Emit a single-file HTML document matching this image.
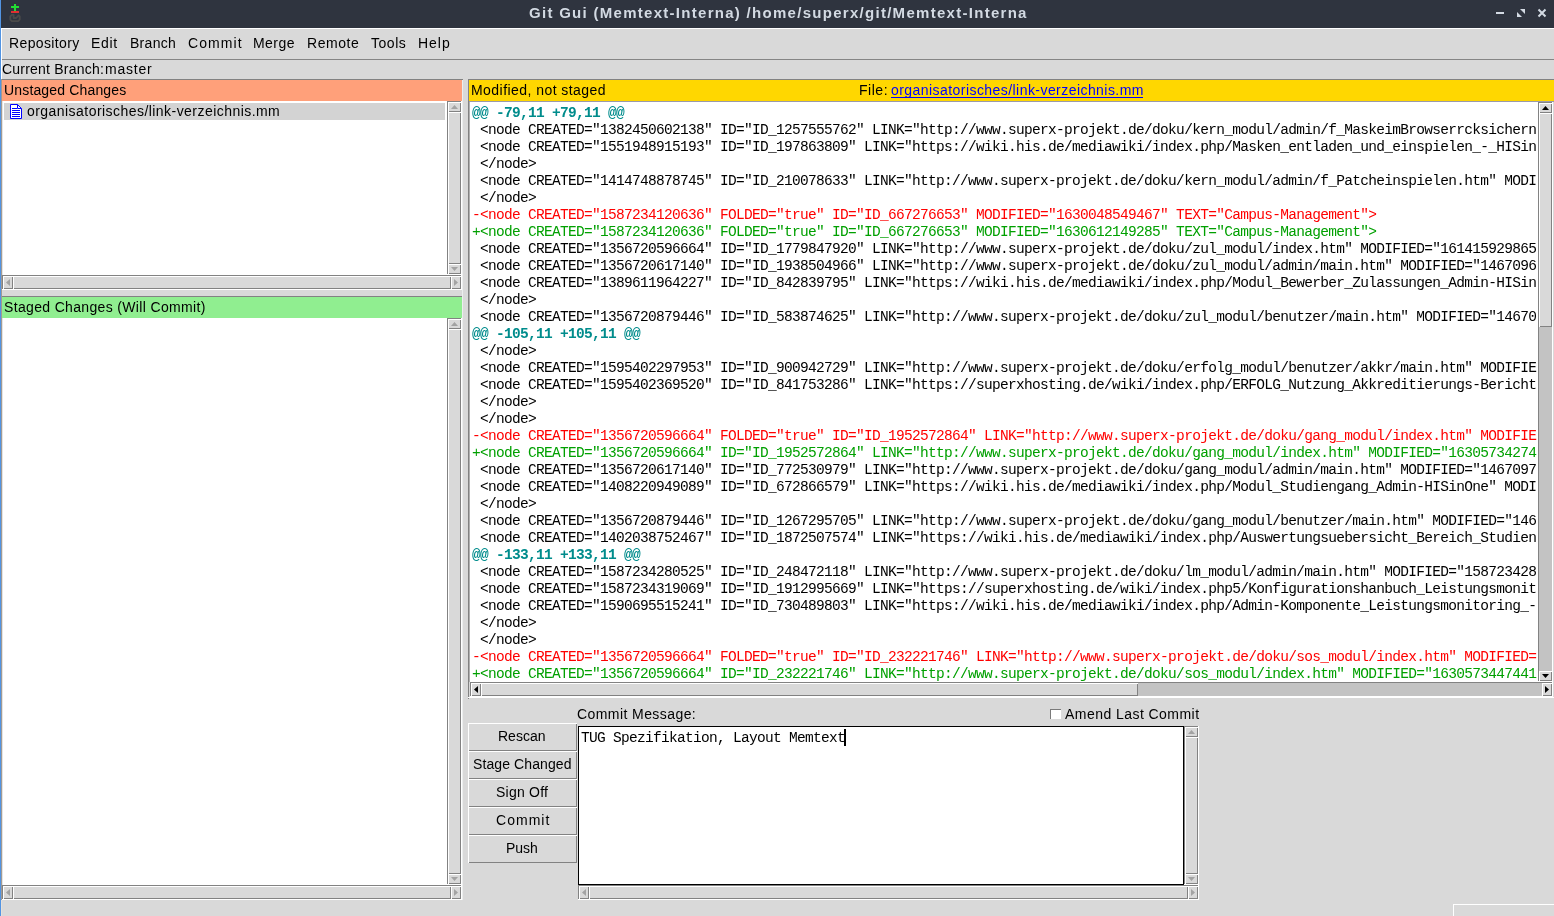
<!DOCTYPE html>
<html><head><meta charset="utf-8"><style>
html,body{margin:0;padding:0;}
body{width:1554px;height:916px;position:relative;overflow:hidden;background:#d9d9d9;}
body>div,body>svg{position:absolute;}
.ui{font-family:"Liberation Sans",sans-serif;font-size:14px;color:#000;white-space:pre;line-height:16px;will-change:transform;}
.mono{font-family:"Liberation Mono",monospace;font-size:14.5px;letter-spacing:-0.7px;white-space:pre;line-height:17px;will-change:transform;}
</style></head><body>
<div style="left:0px;top:0px;width:1px;height:916px;background:#5294e2;"></div><div style="left:1px;top:0px;width:1553px;height:28px;background:#2f343f;"></div><div style="left:1px;top:28px;width:1553px;height:1px;background:#ffffff;"></div><div style="left:1px;top:29px;width:1px;height:887px;background:#ffffff;"></div><div style="left:1px;top:79px;width:1px;height:821px;background:#a09a94;"></div><div style="left:1px;top:900px;width:1px;height:16px;background:#e6e0da;"></div><div class="ui" style="left:528.63px;top:5px;letter-spacing:1.285px;font-weight:bold;font-size:15px;color:#d3dae3">Git Gui (Memtext-Interna) /home/superx/git/Memtext-Interna</div><div style="left:1496px;top:12px;width:8px;height:2px;background:#d3dae3;"></div><svg style="left:0;top:0" width="1554" height="28"><polygon points="1520,9 1525,9 1525,14" fill="#d3dae3"/><polygon points="1517,12 1517,17 1522,17" fill="#d3dae3"/><path d="M1538.5,9.5 L1545.5,16.5 M1545.5,9.5 L1538.5,16.5" stroke="#d3dae3" stroke-width="2"/><rect x="11" y="6" width="8" height="2" fill="#22dd33"/><rect x="14" y="4" width="2" height="7" fill="#22dd33"/><rect x="11" y="11" width="8" height="2" fill="#e03030"/><path d="M13.6,14.9 H11.8 L10.3,16.4 V19.6 L11.8,21.1 H18.2 L19.7,19.6 V16.4 L18.6,15.3 L16.2,18 H13.6 Z" stroke="#4a4a4a" stroke-width="1.8" fill="none" stroke-linejoin="round"/></svg><div class="ui" style="left:8.68px;top:35px;letter-spacing:0.372px;;">Repository</div><div class="ui" style="left:91.48px;top:35px;letter-spacing:0.703px;;">Edit</div><div class="ui" style="left:129.58px;top:35px;letter-spacing:0.281px;;">Branch</div><div class="ui" style="left:187.68px;top:35px;letter-spacing:1.064px;;">Commit</div><div class="ui" style="left:252.69px;top:35px;letter-spacing:0.443px;;">Merge</div><div class="ui" style="left:306.58px;top:35px;letter-spacing:0.568px;;">Remote</div><div class="ui" style="left:370.93px;top:35px;letter-spacing:0.542px;;">Tools</div><div class="ui" style="left:418.18px;top:35px;letter-spacing:0.968px;;">Help</div><div style="left:2px;top:59px;width:1552px;height:1px;background:#858585;"></div><div class="ui" style="left:1.68px;top:61px;letter-spacing:0.216px;;">Current Branch:</div><div class="ui" style="left:104.64px;top:61px;letter-spacing:0.768px;;">master</div><div style="left:2px;top:79px;width:461px;height:1px;background:#828282;"></div><div style="left:2px;top:80px;width:460px;height:21px;background:#ffa07a;"></div><div class="ui" style="left:3.6px;top:82px;letter-spacing:0.16px;;">Unstaged Changes</div><div style="left:2px;top:101px;width:445px;height:174px;background:#ffffff;"></div><div style="left:4px;top:103px;width:441px;height:17px;background:#d3d3d3;"></div><svg style="left:10px;top:104px" width="12" height="15"><path d="M0.5,0.5 H7.5 L11.5,4.5 V14.5 H0.5 Z" fill="#fff" stroke="#0000ff"/><path d="M7.5,0.5 V4.5 H11.5" fill="none" stroke="#0000ff"/><path d="M2,4.5 H7 M2,6.5 H10 M2,8.5 H10 M2,10.5 H10 M2,12.5 H10" stroke="#0000ff"/></svg><div class="ui" style="left:27.26px;top:103px;letter-spacing:0.451px;;">organisatorisches/link-verzeichnis.mm</div><div style="left:447px;top:101px;width:15px;height:174px;background:#c3c3c3;"></div><div style="left:447px;top:101px;width:15px;height:1px;background:#828282;"></div><div style="left:447px;top:101px;width:1px;height:174px;background:#828282;"></div><div style="left:447px;top:274px;width:15px;height:1px;background:#ffffff;"></div><div style="left:461px;top:101px;width:1px;height:174px;background:#ffffff;"></div><div style="left:448px;top:102px;width:13px;height:10px;background:#d9d9d9;"></div><div style="left:448px;top:111px;width:13px;height:1px;background:#828282;"></div><div style="left:460px;top:102px;width:1px;height:10px;background:#828282;"></div><div style="left:448px;top:102px;width:13px;height:1px;background:#ffffff;"></div><div style="left:448px;top:102px;width:1px;height:10px;background:#ffffff;"></div><div style="left:448px;top:264px;width:13px;height:10px;background:#d9d9d9;"></div><div style="left:448px;top:273px;width:13px;height:1px;background:#828282;"></div><div style="left:460px;top:264px;width:1px;height:10px;background:#828282;"></div><div style="left:448px;top:264px;width:13px;height:1px;background:#ffffff;"></div><div style="left:448px;top:264px;width:1px;height:10px;background:#ffffff;"></div><div style="left:448px;top:112px;width:13px;height:152px;background:#d9d9d9;"></div><div style="left:448px;top:263px;width:13px;height:1px;background:#828282;"></div><div style="left:460px;top:112px;width:1px;height:152px;background:#828282;"></div><div style="left:448px;top:112px;width:13px;height:1px;background:#ffffff;"></div><div style="left:448px;top:112px;width:1px;height:152px;background:#ffffff;"></div><div style="left:2px;top:275px;width:460px;height:15px;background:#c3c3c3;"></div><div style="left:2px;top:275px;width:460px;height:1px;background:#828282;"></div><div style="left:2px;top:275px;width:1px;height:15px;background:#828282;"></div><div style="left:2px;top:289px;width:460px;height:1px;background:#ffffff;"></div><div style="left:461px;top:275px;width:1px;height:15px;background:#ffffff;"></div><div style="left:3px;top:276px;width:10px;height:13px;background:#d9d9d9;"></div><div style="left:3px;top:288px;width:10px;height:1px;background:#828282;"></div><div style="left:12px;top:276px;width:1px;height:13px;background:#828282;"></div><div style="left:3px;top:276px;width:10px;height:1px;background:#ffffff;"></div><div style="left:3px;top:276px;width:1px;height:13px;background:#ffffff;"></div><div style="left:451px;top:276px;width:10px;height:13px;background:#d9d9d9;"></div><div style="left:451px;top:288px;width:10px;height:1px;background:#828282;"></div><div style="left:460px;top:276px;width:1px;height:13px;background:#828282;"></div><div style="left:451px;top:276px;width:10px;height:1px;background:#ffffff;"></div><div style="left:451px;top:276px;width:1px;height:13px;background:#ffffff;"></div><div style="left:13px;top:276px;width:438px;height:13px;background:#d9d9d9;"></div><div style="left:13px;top:288px;width:438px;height:1px;background:#828282;"></div><div style="left:450px;top:276px;width:1px;height:13px;background:#828282;"></div><div style="left:13px;top:276px;width:438px;height:1px;background:#ffffff;"></div><div style="left:13px;top:276px;width:1px;height:13px;background:#ffffff;"></div><div style="left:2px;top:296px;width:461px;height:1px;background:#828282;"></div><div style="left:2px;top:297px;width:460px;height:21px;background:#90ee90;"></div><div class="ui" style="left:3.89px;top:299px;letter-spacing:0.34px;;">Staged Changes (Will Commit)</div><div style="left:2px;top:318px;width:445px;height:567px;background:#ffffff;"></div><div style="left:447px;top:318px;width:15px;height:567px;background:#c3c3c3;"></div><div style="left:447px;top:318px;width:15px;height:1px;background:#828282;"></div><div style="left:447px;top:318px;width:1px;height:567px;background:#828282;"></div><div style="left:447px;top:884px;width:15px;height:1px;background:#ffffff;"></div><div style="left:461px;top:318px;width:1px;height:567px;background:#ffffff;"></div><div style="left:448px;top:319px;width:13px;height:10px;background:#d9d9d9;"></div><div style="left:448px;top:328px;width:13px;height:1px;background:#828282;"></div><div style="left:460px;top:319px;width:1px;height:10px;background:#828282;"></div><div style="left:448px;top:319px;width:13px;height:1px;background:#ffffff;"></div><div style="left:448px;top:319px;width:1px;height:10px;background:#ffffff;"></div><div style="left:448px;top:874px;width:13px;height:10px;background:#d9d9d9;"></div><div style="left:448px;top:883px;width:13px;height:1px;background:#828282;"></div><div style="left:460px;top:874px;width:1px;height:10px;background:#828282;"></div><div style="left:448px;top:874px;width:13px;height:1px;background:#ffffff;"></div><div style="left:448px;top:874px;width:1px;height:10px;background:#ffffff;"></div><div style="left:448px;top:329px;width:13px;height:545px;background:#d9d9d9;"></div><div style="left:448px;top:873px;width:13px;height:1px;background:#828282;"></div><div style="left:460px;top:329px;width:1px;height:545px;background:#828282;"></div><div style="left:448px;top:329px;width:13px;height:1px;background:#ffffff;"></div><div style="left:448px;top:329px;width:1px;height:545px;background:#ffffff;"></div><div style="left:2px;top:885px;width:460px;height:15px;background:#c3c3c3;"></div><div style="left:2px;top:885px;width:460px;height:1px;background:#828282;"></div><div style="left:2px;top:885px;width:1px;height:15px;background:#828282;"></div><div style="left:2px;top:899px;width:460px;height:1px;background:#ffffff;"></div><div style="left:461px;top:885px;width:1px;height:15px;background:#ffffff;"></div><div style="left:3px;top:886px;width:10px;height:13px;background:#d9d9d9;"></div><div style="left:3px;top:898px;width:10px;height:1px;background:#828282;"></div><div style="left:12px;top:886px;width:1px;height:13px;background:#828282;"></div><div style="left:3px;top:886px;width:10px;height:1px;background:#ffffff;"></div><div style="left:3px;top:886px;width:1px;height:13px;background:#ffffff;"></div><div style="left:451px;top:886px;width:10px;height:13px;background:#d9d9d9;"></div><div style="left:451px;top:898px;width:10px;height:1px;background:#828282;"></div><div style="left:460px;top:886px;width:1px;height:13px;background:#828282;"></div><div style="left:451px;top:886px;width:10px;height:1px;background:#ffffff;"></div><div style="left:451px;top:886px;width:1px;height:13px;background:#ffffff;"></div><div style="left:13px;top:886px;width:438px;height:13px;background:#d9d9d9;"></div><div style="left:13px;top:898px;width:438px;height:1px;background:#828282;"></div><div style="left:450px;top:886px;width:1px;height:13px;background:#828282;"></div><div style="left:13px;top:886px;width:438px;height:1px;background:#ffffff;"></div><div style="left:13px;top:886px;width:1px;height:13px;background:#ffffff;"></div><div style="left:468px;top:79px;width:1086px;height:1px;background:#828282;"></div><div style="left:468px;top:79px;width:1px;height:620px;background:#828282;"></div><div style="left:469px;top:80px;width:1085px;height:21px;background:#ffd700;"></div><div class="ui" style="left:470.69px;top:82px;letter-spacing:0.449px;;">Modified, not staged</div><div class="ui" style="left:858.78px;top:82px;letter-spacing:0.533px;;">File:</div><div class="ui" style="left:890.76px;top:82px;letter-spacing:0.442px;;color:#0000ff">organisatorisches/link-verzeichnis.mm</div><div style="left:891px;top:97px;width:252px;height:1px;background:#0000ff;"></div><div style="left:469px;top:101px;width:1085px;height:1px;background:#9a9aaa;"></div><div style="left:469px;top:102px;width:1069px;height:580px;background:#ffffff;"></div><div style="left:469px;top:102px;width:1px;height:580px;background:#b0b0b0;"></div><div class="mono" style="left:472px;top:105px;width:1065px;height:577px;overflow:hidden"><div style="color:#008c8c;font-weight:bold">@@ -79,11 +79,11 @@</div><div style="color:#000"> &lt;node CREATED=&quot;1382450602138&quot; ID=&quot;ID_1257555762&quot; LINK=&quot;http://www.superx-projekt.de/doku/kern_modul/admin/f_MaskeimBrowserrcksichern</div><div style="color:#000"> &lt;node CREATED=&quot;1551948915193&quot; ID=&quot;ID_197863809&quot; LINK=&quot;https://wiki.his.de/mediawiki/index.php/Masken_entladen_und_einspielen_-_HISin</div><div style="color:#000"> &lt;/node&gt;</div><div style="color:#000"> &lt;node CREATED=&quot;1414748878745&quot; ID=&quot;ID_210078633&quot; LINK=&quot;http://www.superx-projekt.de/doku/kern_modul/admin/f_Patcheinspielen.htm&quot; MODI</div><div style="color:#000"> &lt;/node&gt;</div><div style="color:#ff0000">-&lt;node CREATED=&quot;1587234120636&quot; FOLDED=&quot;true&quot; ID=&quot;ID_667276653&quot; MODIFIED=&quot;1630048549467&quot; TEXT=&quot;Campus-Management&quot;&gt;</div><div style="color:#00a000">+&lt;node CREATED=&quot;1587234120636&quot; FOLDED=&quot;true&quot; ID=&quot;ID_667276653&quot; MODIFIED=&quot;1630612149285&quot; TEXT=&quot;Campus-Management&quot;&gt;</div><div style="color:#000"> &lt;node CREATED=&quot;1356720596664&quot; ID=&quot;ID_1779847920&quot; LINK=&quot;http://www.superx-projekt.de/doku/zul_modul/index.htm&quot; MODIFIED=&quot;161415929865</div><div style="color:#000"> &lt;node CREATED=&quot;1356720617140&quot; ID=&quot;ID_1938504966&quot; LINK=&quot;http://www.superx-projekt.de/doku/zul_modul/admin/main.htm&quot; MODIFIED=&quot;1467096</div><div style="color:#000"> &lt;node CREATED=&quot;1389611964227&quot; ID=&quot;ID_842839795&quot; LINK=&quot;https://wiki.his.de/mediawiki/index.php/Modul_Bewerber_Zulassungen_Admin-HISin</div><div style="color:#000"> &lt;/node&gt;</div><div style="color:#000"> &lt;node CREATED=&quot;1356720879446&quot; ID=&quot;ID_583874625&quot; LINK=&quot;http://www.superx-projekt.de/doku/zul_modul/benutzer/main.htm&quot; MODIFIED=&quot;14670</div><div style="color:#008c8c;font-weight:bold">@@ -105,11 +105,11 @@</div><div style="color:#000"> &lt;/node&gt;</div><div style="color:#000"> &lt;node CREATED=&quot;1595402297953&quot; ID=&quot;ID_900942729&quot; LINK=&quot;http://www.superx-projekt.de/doku/erfolg_modul/benutzer/akkr/main.htm&quot; MODIFIE</div><div style="color:#000"> &lt;node CREATED=&quot;1595402369520&quot; ID=&quot;ID_841753286&quot; LINK=&quot;https://superxhosting.de/wiki/index.php/ERFOLG_Nutzung_Akkreditierungs-Bericht</div><div style="color:#000"> &lt;/node&gt;</div><div style="color:#000"> &lt;/node&gt;</div><div style="color:#ff0000">-&lt;node CREATED=&quot;1356720596664&quot; FOLDED=&quot;true&quot; ID=&quot;ID_1952572864&quot; LINK=&quot;http://www.superx-projekt.de/doku/gang_modul/index.htm&quot; MODIFIE</div><div style="color:#00a000">+&lt;node CREATED=&quot;1356720596664&quot; ID=&quot;ID_1952572864&quot; LINK=&quot;http://www.superx-projekt.de/doku/gang_modul/index.htm&quot; MODIFIED=&quot;16305734274</div><div style="color:#000"> &lt;node CREATED=&quot;1356720617140&quot; ID=&quot;ID_772530979&quot; LINK=&quot;http://www.superx-projekt.de/doku/gang_modul/admin/main.htm&quot; MODIFIED=&quot;1467097</div><div style="color:#000"> &lt;node CREATED=&quot;1408220949089&quot; ID=&quot;ID_672866579&quot; LINK=&quot;https://wiki.his.de/mediawiki/index.php/Modul_Studiengang_Admin-HISinOne&quot; MODI</div><div style="color:#000"> &lt;/node&gt;</div><div style="color:#000"> &lt;node CREATED=&quot;1356720879446&quot; ID=&quot;ID_1267295705&quot; LINK=&quot;http://www.superx-projekt.de/doku/gang_modul/benutzer/main.htm&quot; MODIFIED=&quot;146</div><div style="color:#000"> &lt;node CREATED=&quot;1402038752467&quot; ID=&quot;ID_1872507574&quot; LINK=&quot;https://wiki.his.de/mediawiki/index.php/Auswertungsuebersicht_Bereich_Studien</div><div style="color:#008c8c;font-weight:bold">@@ -133,11 +133,11 @@</div><div style="color:#000"> &lt;node CREATED=&quot;1587234280525&quot; ID=&quot;ID_248472118&quot; LINK=&quot;http://www.superx-projekt.de/doku/lm_modul/admin/main.htm&quot; MODIFIED=&quot;158723428</div><div style="color:#000"> &lt;node CREATED=&quot;1587234319069&quot; ID=&quot;ID_1912995669&quot; LINK=&quot;https://superxhosting.de/wiki/index.php5/Konfigurationshanbuch_Leistungsmonit</div><div style="color:#000"> &lt;node CREATED=&quot;1590695515241&quot; ID=&quot;ID_730489803&quot; LINK=&quot;https://wiki.his.de/mediawiki/index.php/Admin-Komponente_Leistungsmonitoring_-</div><div style="color:#000"> &lt;/node&gt;</div><div style="color:#000"> &lt;/node&gt;</div><div style="color:#ff0000">-&lt;node CREATED=&quot;1356720596664&quot; FOLDED=&quot;true&quot; ID=&quot;ID_232221746&quot; LINK=&quot;http://www.superx-projekt.de/doku/sos_modul/index.htm&quot; MODIFIED=</div><div style="color:#00a000">+&lt;node CREATED=&quot;1356720596664&quot; ID=&quot;ID_232221746&quot; LINK=&quot;http://www.superx-projekt.de/doku/sos_modul/index.htm&quot; MODIFIED=&quot;1630573447441</div></div><div style="left:1538px;top:102px;width:15px;height:580px;background:#c3c3c3;"></div><div style="left:1538px;top:102px;width:15px;height:1px;background:#828282;"></div><div style="left:1538px;top:102px;width:1px;height:580px;background:#828282;"></div><div style="left:1538px;top:681px;width:15px;height:1px;background:#ffffff;"></div><div style="left:1552px;top:102px;width:1px;height:580px;background:#ffffff;"></div><div style="left:1539px;top:103px;width:13px;height:10px;background:#d9d9d9;"></div><div style="left:1539px;top:112px;width:13px;height:1px;background:#828282;"></div><div style="left:1551px;top:103px;width:1px;height:10px;background:#828282;"></div><div style="left:1539px;top:103px;width:13px;height:1px;background:#ffffff;"></div><div style="left:1539px;top:103px;width:1px;height:10px;background:#ffffff;"></div><div style="left:1539px;top:671px;width:13px;height:10px;background:#d9d9d9;"></div><div style="left:1539px;top:680px;width:13px;height:1px;background:#828282;"></div><div style="left:1551px;top:671px;width:1px;height:10px;background:#828282;"></div><div style="left:1539px;top:671px;width:13px;height:1px;background:#ffffff;"></div><div style="left:1539px;top:671px;width:1px;height:10px;background:#ffffff;"></div><div style="left:1539px;top:113px;width:13px;height:214px;background:#d9d9d9;"></div><div style="left:1539px;top:326px;width:13px;height:1px;background:#828282;"></div><div style="left:1551px;top:113px;width:1px;height:214px;background:#828282;"></div><div style="left:1539px;top:113px;width:13px;height:1px;background:#ffffff;"></div><div style="left:1539px;top:113px;width:1px;height:214px;background:#ffffff;"></div><div style="left:470px;top:682px;width:1083px;height:15px;background:#c3c3c3;"></div><div style="left:470px;top:682px;width:1083px;height:1px;background:#828282;"></div><div style="left:470px;top:682px;width:1px;height:15px;background:#828282;"></div><div style="left:470px;top:696px;width:1083px;height:1px;background:#ffffff;"></div><div style="left:1552px;top:682px;width:1px;height:15px;background:#ffffff;"></div><div style="left:471px;top:683px;width:10px;height:13px;background:#d9d9d9;"></div><div style="left:471px;top:695px;width:10px;height:1px;background:#828282;"></div><div style="left:480px;top:683px;width:1px;height:13px;background:#828282;"></div><div style="left:471px;top:683px;width:10px;height:1px;background:#ffffff;"></div><div style="left:471px;top:683px;width:1px;height:13px;background:#ffffff;"></div><div style="left:1542px;top:683px;width:10px;height:13px;background:#d9d9d9;"></div><div style="left:1542px;top:695px;width:10px;height:1px;background:#828282;"></div><div style="left:1551px;top:683px;width:1px;height:13px;background:#828282;"></div><div style="left:1542px;top:683px;width:10px;height:1px;background:#ffffff;"></div><div style="left:1542px;top:683px;width:1px;height:13px;background:#ffffff;"></div><div style="left:481px;top:683px;width:657px;height:13px;background:#d9d9d9;"></div><div style="left:481px;top:695px;width:657px;height:1px;background:#828282;"></div><div style="left:1137px;top:683px;width:1px;height:13px;background:#828282;"></div><div style="left:481px;top:683px;width:657px;height:1px;background:#ffffff;"></div><div style="left:481px;top:683px;width:1px;height:13px;background:#ffffff;"></div><div style="left:468px;top:697px;width:1086px;height:1px;background:#ffffff;"></div><div style="left:1453px;top:904px;width:101px;height:1px;background:#ffffff;"></div><div style="left:1453px;top:904px;width:1px;height:12px;background:#ffffff;"></div><div style="left:462px;top:80px;width:1px;height:820px;background:#eceeee;"></div><div style="left:2px;top:101px;width:1px;height:174px;background:#e4e4e4;"></div><div style="left:2px;top:318px;width:1px;height:567px;background:#e4e4e4;"></div><div class="ui" style="left:577.38px;top:706px;letter-spacing:0.423px;;">Commit Message:</div><div style="left:1050px;top:709px;width:11px;height:10px;background:#ffffff;box-sizing:border-box;border-top:1px solid #7a7a7a;border-left:1px solid #7a7a7a;"></div><div class="ui" style="left:1064.57px;top:706px;letter-spacing:0.451px;;">Amend Last Commit</div><div style="left:468px;top:723px;width:109px;height:28px;background:#d9d9d9;"></div><div style="left:468px;top:750px;width:109px;height:1px;background:#828282;"></div><div style="left:576px;top:723px;width:1px;height:28px;background:#828282;"></div><div style="left:468px;top:723px;width:109px;height:1px;background:#ffffff;"></div><div style="left:468px;top:723px;width:1px;height:28px;background:#ffffff;"></div><div class="ui" style="left:497.68px;top:728px;letter-spacing:0.007px;;">Rescan</div><div style="left:468px;top:751px;width:109px;height:28px;background:#d9d9d9;"></div><div style="left:468px;top:778px;width:109px;height:1px;background:#828282;"></div><div style="left:576px;top:751px;width:1px;height:28px;background:#828282;"></div><div style="left:468px;top:751px;width:109px;height:1px;background:#ffffff;"></div><div style="left:468px;top:751px;width:1px;height:28px;background:#ffffff;"></div><div class="ui" style="left:472.89px;top:756px;letter-spacing:0.098px;;">Stage Changed</div><div style="left:468px;top:779px;width:109px;height:28px;background:#d9d9d9;"></div><div style="left:468px;top:806px;width:109px;height:1px;background:#828282;"></div><div style="left:576px;top:779px;width:1px;height:28px;background:#828282;"></div><div style="left:468px;top:779px;width:109px;height:1px;background:#ffffff;"></div><div style="left:468px;top:779px;width:1px;height:28px;background:#ffffff;"></div><div class="ui" style="left:495.79px;top:784px;letter-spacing:0.233px;;">Sign Off</div><div style="left:468px;top:807px;width:109px;height:28px;background:#d9d9d9;"></div><div style="left:468px;top:834px;width:109px;height:1px;background:#828282;"></div><div style="left:576px;top:807px;width:1px;height:28px;background:#828282;"></div><div style="left:468px;top:807px;width:109px;height:1px;background:#ffffff;"></div><div style="left:468px;top:807px;width:1px;height:28px;background:#ffffff;"></div><div class="ui" style="left:495.58px;top:812px;letter-spacing:1.024px;;">Commit</div><div style="left:468px;top:835px;width:109px;height:28px;background:#d9d9d9;"></div><div style="left:468px;top:862px;width:109px;height:1px;background:#828282;"></div><div style="left:576px;top:835px;width:1px;height:28px;background:#828282;"></div><div style="left:468px;top:835px;width:109px;height:1px;background:#ffffff;"></div><div style="left:468px;top:835px;width:1px;height:28px;background:#ffffff;"></div><div class="ui" style="left:505.78px;top:840px;letter-spacing:-0.036px;;">Push</div><div style="left:578px;top:726px;width:606px;height:159px;background:#ffffff;box-sizing:border-box;border:1px solid #000;"></div><div class="mono" style="left:581px;top:730px;color:#000">TUG Spezifikation, Layout Memtext</div><div style="left:844px;top:729px;width:2px;height:17px;background:#000;"></div><div style="left:1184px;top:726px;width:15px;height:159px;background:#c3c3c3;"></div><div style="left:1184px;top:726px;width:15px;height:1px;background:#828282;"></div><div style="left:1184px;top:726px;width:1px;height:159px;background:#828282;"></div><div style="left:1184px;top:884px;width:15px;height:1px;background:#ffffff;"></div><div style="left:1198px;top:726px;width:1px;height:159px;background:#ffffff;"></div><div style="left:1185px;top:727px;width:13px;height:10px;background:#d9d9d9;"></div><div style="left:1185px;top:736px;width:13px;height:1px;background:#828282;"></div><div style="left:1197px;top:727px;width:1px;height:10px;background:#828282;"></div><div style="left:1185px;top:727px;width:13px;height:1px;background:#ffffff;"></div><div style="left:1185px;top:727px;width:1px;height:10px;background:#ffffff;"></div><div style="left:1185px;top:874px;width:13px;height:10px;background:#d9d9d9;"></div><div style="left:1185px;top:883px;width:13px;height:1px;background:#828282;"></div><div style="left:1197px;top:874px;width:1px;height:10px;background:#828282;"></div><div style="left:1185px;top:874px;width:13px;height:1px;background:#ffffff;"></div><div style="left:1185px;top:874px;width:1px;height:10px;background:#ffffff;"></div><div style="left:1185px;top:737px;width:13px;height:137px;background:#d9d9d9;"></div><div style="left:1185px;top:873px;width:13px;height:1px;background:#828282;"></div><div style="left:1197px;top:737px;width:1px;height:137px;background:#828282;"></div><div style="left:1185px;top:737px;width:13px;height:1px;background:#ffffff;"></div><div style="left:1185px;top:737px;width:1px;height:137px;background:#ffffff;"></div><div style="left:578px;top:885px;width:621px;height:15px;background:#c3c3c3;"></div><div style="left:578px;top:885px;width:621px;height:1px;background:#828282;"></div><div style="left:578px;top:885px;width:1px;height:15px;background:#828282;"></div><div style="left:578px;top:899px;width:621px;height:1px;background:#ffffff;"></div><div style="left:1198px;top:885px;width:1px;height:15px;background:#ffffff;"></div><div style="left:579px;top:886px;width:10px;height:13px;background:#d9d9d9;"></div><div style="left:579px;top:898px;width:10px;height:1px;background:#828282;"></div><div style="left:588px;top:886px;width:1px;height:13px;background:#828282;"></div><div style="left:579px;top:886px;width:10px;height:1px;background:#ffffff;"></div><div style="left:579px;top:886px;width:1px;height:13px;background:#ffffff;"></div><div style="left:1188px;top:886px;width:10px;height:13px;background:#d9d9d9;"></div><div style="left:1188px;top:898px;width:10px;height:1px;background:#828282;"></div><div style="left:1197px;top:886px;width:1px;height:13px;background:#828282;"></div><div style="left:1188px;top:886px;width:10px;height:1px;background:#ffffff;"></div><div style="left:1188px;top:886px;width:1px;height:13px;background:#ffffff;"></div><div style="left:589px;top:886px;width:599px;height:13px;background:#d9d9d9;"></div><div style="left:589px;top:898px;width:599px;height:1px;background:#828282;"></div><div style="left:1187px;top:886px;width:1px;height:13px;background:#828282;"></div><div style="left:589px;top:886px;width:599px;height:1px;background:#ffffff;"></div><div style="left:589px;top:886px;width:1px;height:13px;background:#ffffff;"></div>
<svg style="left:0;top:0" width="1554" height="916"><polygon points="451.0,109 458.0,109 454.5,105" fill="#a3a3a3"/><polygon points="451.0,267 458.0,267 454.5,271" fill="#a3a3a3"/><polygon points="10,279.0 10,286.0 6,282.5" fill="#a3a3a3"/><polygon points="454,279.0 454,286.0 458,282.5" fill="#a3a3a3"/><polygon points="451.0,326 458.0,326 454.5,322" fill="#a3a3a3"/><polygon points="451.0,877 458.0,877 454.5,881" fill="#a3a3a3"/><polygon points="10,889.0 10,896.0 6,892.5" fill="#a3a3a3"/><polygon points="454,889.0 454,896.0 458,892.5" fill="#a3a3a3"/><polygon points="1542.0,110 1549.0,110 1545.5,106" fill="#000"/><polygon points="1542.0,674 1549.0,674 1545.5,678" fill="#000"/><polygon points="478,686.0 478,693.0 474,689.5" fill="#000"/><polygon points="1545,686.0 1545,693.0 1549,689.5" fill="#000"/><polygon points="1188.0,734 1195.0,734 1191.5,730" fill="#a3a3a3"/><polygon points="1188.0,877 1195.0,877 1191.5,881" fill="#a3a3a3"/><polygon points="586,889.0 586,896.0 582,892.5" fill="#a3a3a3"/><polygon points="1191,889.0 1191,896.0 1195,892.5" fill="#a3a3a3"/></svg>
</body></html>
